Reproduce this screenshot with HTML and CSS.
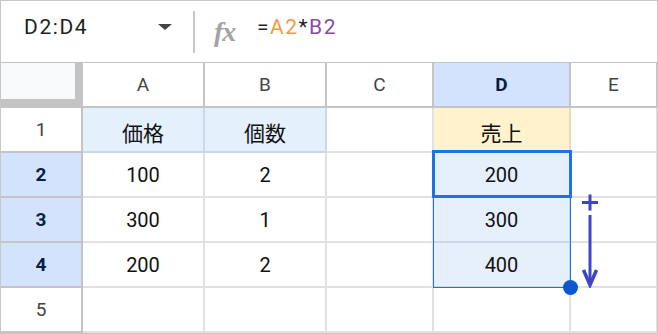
FILE: index.html
```html
<!DOCTYPE html>
<html lang="ja">
<head>
    <meta charset="UTF-8">
    <meta name="viewport" content="width=device-width, initial-scale=1.0">
    <title>Sheet</title>
    <link rel="stylesheet" href="styles.css">
</head>
<body>
    <div class="sheet">
        <div class="topbar">
            <div class="namebox">D2:D4</div>
            <div class="caret"></div>
            <div class="divider"></div>
            <div class="fx">fx</div>
            <div class="formula">=<span class="ref-a">A2</span>*<span class="ref-b">B2</span></div>
        </div>
        <div class="grid">
            <div class="corner"></div>
            <div class="col-head">A</div>
            <div class="col-head">B</div>
            <div class="col-head">C</div>
            <div class="col-head active">D</div>
            <div class="col-head last">E</div>

            <div class="row-head">1</div>
            <div class="cell label">価格</div>
            <div class="cell label">個数</div>
            <div class="cell"></div>
            <div class="cell total">売上</div>
            <div class="cell last"></div>

            <div class="row-head active">2</div>
            <div class="cell">100</div>
            <div class="cell">2</div>
            <div class="cell"></div>
            <div class="cell picked anchor">
                200
                <div class="range">
                    <div class="handle"></div>
                    <svg class="drag-arrow" width="20" height="95" viewBox="0 0 20 95">
                        <path d="M2 9.5H18M10 1.5V17.5" stroke="#3f45c7" stroke-width="3" fill="none"/>
                        <path d="M10 22V90" stroke="#3f45c7" stroke-width="3" fill="none"/>
                        <path d="M3.5 77L10 92L16.5 77" stroke="#3f45c7" stroke-width="3.5" fill="none"/>
                    </svg>
                </div>
                <div class="current"></div>
            </div>
            <div class="cell last"></div>

            <div class="row-head active">3</div>
            <div class="cell">300</div>
            <div class="cell">1</div>
            <div class="cell"></div>
            <div class="cell picked">300</div>
            <div class="cell last"></div>

            <div class="row-head active">4</div>
            <div class="cell">200</div>
            <div class="cell">2</div>
            <div class="cell"></div>
            <div class="cell picked">400</div>
            <div class="cell last"></div>

            <div class="row-head">5</div>
            <div class="cell"></div>
            <div class="cell"></div>
            <div class="cell"></div>
            <div class="cell"></div>
            <div class="cell last"></div>
        </div>
    </div>
</body>
</html>
```

FILE: styles.css
```css
* {
    box-sizing: border-box;
}
body {
    margin: 0;
    font-family: Roboto, "Noto Sans CJK JP", sans-serif;
    background: #fff;
}
.sheet {
    width: 658px;
    height: 334px;
    border: 1px solid #c7c7c7;
    overflow: hidden;
}
.topbar {
    display: flex;
    align-items: center;
    height: 62px;
    border-bottom: 1px solid #c4c4c4;
    color: #1f1f1f;
}
.namebox {
    width: 157px;
    padding-left: 23px;
    padding-bottom: 10px;
    font-size: 21px;
    letter-spacing: 1.6px;
}
.caret {
    width: 0;
    height: 0;
    margin-bottom: 10px;
    border-left: 7.5px solid transparent;
    border-right: 7.5px solid transparent;
    border-top: 6px solid #444;
}
.divider {
    width: 2px;
    height: 42px;
    margin-left: 21px;
    background: #c7c7c7;
}
.fx {
    width: 28px;
    margin-left: 19px;
    font-family: "Liberation Serif", serif;
    font-style: italic;
    font-weight: bold;
    font-size: 28px;
    color: #a3a3a3;
    letter-spacing: -1px;
}
.formula {
    margin-left: 15px;
    padding-bottom: 10px;
    font-size: 21px;
    letter-spacing: 1.5px;
}
.ref-a {
    color: #f39a3c;
}
.ref-b {
    color: #8b49a8;
}
.grid {
    display: grid;
    grid-template-columns: 82px 122px 122px 107px 137px 86px;
    grid-template-rows: repeat(6, 45px);
}
.corner {
    background: #f8f9fa;
    border-right: 8px solid #c4c4c4;
    border-bottom: 9px solid #c4c4c4;
}
.col-head, .row-head, .cell {
    display: flex;
    align-items: center;
    justify-content: center;
}
.col-head {
    font-size: 19px;
    color: #444;
    border-right: 2px solid #c4c4c4;
    border-bottom: 2px solid #c4c4c4;
}
.row-head {
    font-size: 19px;
    color: #444;
    border-right: 2px solid #c4c4c4;
    border-bottom: 2px solid #c4c4c4;
}
.col-head.active, .row-head.active {
    background: #d3e3fd;
    color: #0a1d47;
    font-weight: bold;
}
.col-head.last, .cell.last {
    border-right-width: 1px;
}
.cell {
    font-size: 20px;
    color: #111;
    border-right: 2px solid #e1e1e1;
    border-bottom: 2px solid #e1e1e1;
}
.cell.label {
    font-size: 21px;
    padding-top: 4px;
    background: #e4f0fc;
    border-color: #cbd8e6;
}
.cell.total {
    font-size: 21px;
    padding-top: 4px;
    background: #fff2cc;
    border-right-color: #e6dbb4;
}
.cell.picked {
    background: #e6effc;
    border-color: #c9d6e6;
}
.anchor {
    position: relative;
}
.range {
    position: absolute;
    left: -1px;
    top: -1px;
    width: 138px;
    height: 136px;
    border: 1px solid #1a73e8;
}
.current {
    position: absolute;
    left: -2px;
    top: -3px;
    width: 140px;
    height: 48px;
    border: 3px solid #1a73e8;
}
.handle {
    position: absolute;
    right: -8px;
    bottom: -8px;
    width: 15px;
    height: 15px;
    border-radius: 50%;
    background: #0b57d0;
}
.drag-arrow {
    position: absolute;
    left: 146px;
    top: 40px;
}
```
